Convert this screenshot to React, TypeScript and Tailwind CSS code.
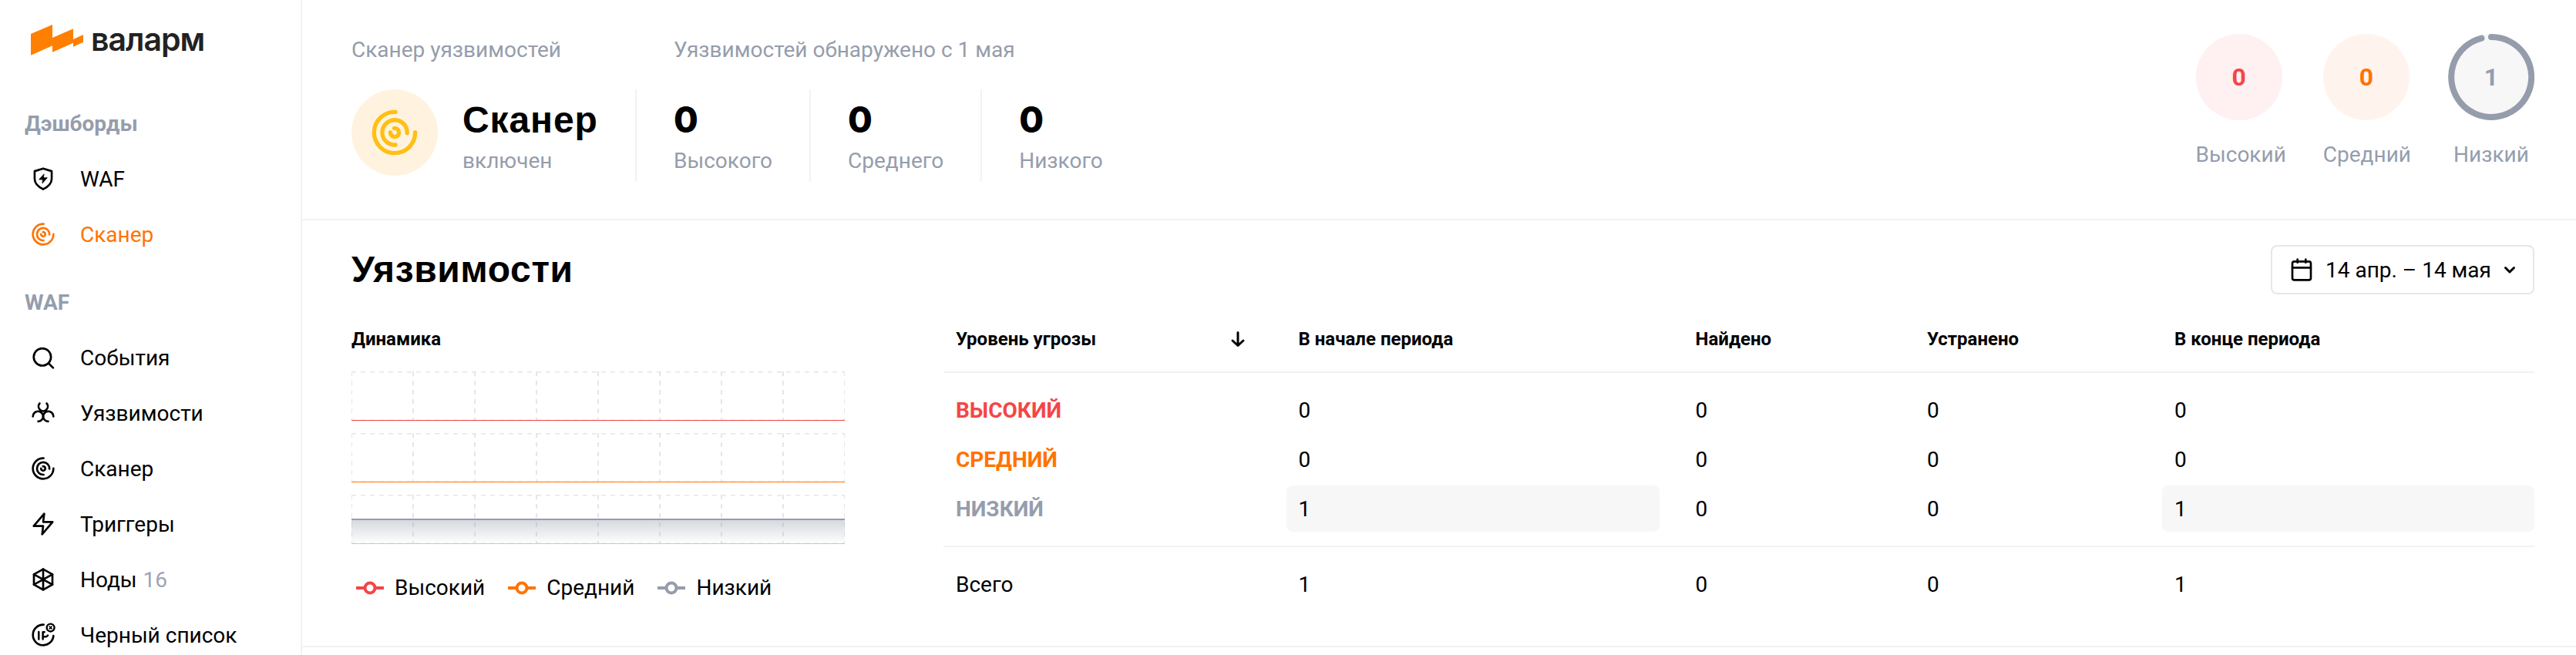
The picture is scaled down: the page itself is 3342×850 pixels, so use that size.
import React from "react";

type IconProps = { className?: string };

function Icon({ className = "", children }: IconProps & { children: React.ReactNode }) {
  return (
    <svg
      viewBox="0 0 24 24"
      fill="none"
      stroke="currentColor"
      strokeWidth="2"
      strokeLinecap="round"
      strokeLinejoin="round"
      className={`block shrink-0 ${className}`}
    >
      {children}
    </svg>
  );
}

const ShieldIcon = (p: IconProps) => (
  <Icon {...p}>
    <path d="M12 2L3.700 4.600V12c0 5.200 4.300 8.200 8.300 10.100 4-1.900 8.300-4.900 8.300-10.100V4.600Z" />
    <path d="M12.700 7.600L8 12.700H11.600L11.200 16.400L16 11H12.400Z" fill="currentColor" strokeWidth="0.600" />
  </Icon>
);

const ScannerIcon = (p: IconProps) => (
  <Icon {...p}>
    <path d="M12.400 2A10 10 0 1 0 22 11.900" />
    <path d="M12.400 18A6.050 6.050 0 1 1 18.050 12.300" />
    <path d="M9.900 11.900A2.100 2.100 0 1 0 11.800 9.900" />
  </Icon>
);

const SearchIcon = (p: IconProps) => (
  <Icon {...p}>
    <circle cx="11.200" cy="11.500" r="8.400" />
    <path d="M21.700 22L17.300 17.600" />
  </Icon>
);

const BiohazardIcon = (p: IconProps) => (
  <Icon {...p}>
    <path d="M8.600 2.600A4.500 4.500 0 1 0 15.400 2.600" />
    <path d="M2 15.300A5 5 0 0 1 12 15.300A5 5 0 0 1 7.200 20.200" />
    <path d="M22 15.300A5 5 0 0 0 12 15.300A5 5 0 0 0 16.800 20.200" />
  </Icon>
);

const BoltIcon = (p: IconProps) => (
  <Icon {...p}>
    <path d="M13 2L2.800 14H12L11 22L21.200 10H12Z" />
  </Icon>
);

const NodesIcon = (p: IconProps) => (
  <Icon {...p}>
    <path d="M12 2L21 7V17L12 22L3 17V7Z" />
    <path d="M12 2V22M3 7L21 17M21 7L3 17" />
  </Icon>
);

const BlacklistIcon = (p: IconProps) => (
  <Icon {...p}>
    <path d="M12.500 2A10 10 0 1 0 22 12.800" />
    <path d="M7.700 9V16.200M11.700 16.200V9.200H13.200M11.700 13.700H14.500A2.500 2.500 0 0 0 16.500 12.500" strokeWidth="1.900" />
    <circle cx="19.200" cy="4.900" r="3.700" strokeWidth="1.800" />
    <path d="M18.200 3.900L20.200 5.900M20.200 3.900L18.200 5.900" strokeWidth="1.300" />
  </Icon>
);

const CalendarIcon = (p: IconProps) => (
  <Icon {...p}>
    <rect x="3" y="4" width="18" height="18" rx="2" />
    <path d="M16 2V5M8 2V5M3 10H21" />
  </Icon>
);

const LogoMark = () => (
  <svg width="68" height="40" viewBox="0 0 68 40" className="block shrink-0" fill="#ff7f00">
    <path d="M0 12L28 0V17L55 5.300V19L68 13V22.700L55 28.700V23.700L28 35.700V27.300L0 39.700Z" />
  </svg>
);

function SectionTitle({ children }: { children: React.ReactNode }) {
  return <div className="flex h-[72px] items-center pt-0.5 pl-8 font-bold text-[#959dac]">{children}</div>;
}

function NavItem({
  icon: I,
  label,
  count,
  active,
}: {
  icon: (p: IconProps) => React.ReactElement;
  label: string;
  count?: number;
  active?: boolean;
}) {
  return (
    <a className={`flex h-[72px] items-center pl-10 ${active ? "text-[#ff7300]" : "text-black"}`}>
      <I className="size-8" />
      <span className="ml-8 pt-0.5">{label}</span>
      {count !== undefined && <span className="ml-2 pt-0.5 text-[#9da4b5]">{count}</span>}
    </a>
  );
}

function Sidebar() {
  return (
    <aside className="h-[850px] w-[392px] shrink-0 overflow-hidden border-r-2 border-[#f1f2f4]">
      <div className="flex h-[124px] items-start pt-8 pl-10">
        <LogoMark />
        <span className="ml-[10px] -mt-[5px] font-['Inter'] text-[41px] leading-[48px] font-semibold tracking-[-1px] text-[#222]">
          валарм
        </span>
      </div>
      <SectionTitle>Дэшборды</SectionTitle>
      <NavItem icon={ShieldIcon} label="WAF" />
      <NavItem icon={ScannerIcon} label="Сканер" active />
      <div className="h-4" />
      <SectionTitle>WAF</SectionTitle>
      <NavItem icon={SearchIcon} label="События" />
      <NavItem icon={BiohazardIcon} label="Уязвимости" />
      <NavItem icon={ScannerIcon} label="Сканер" />
      <NavItem icon={BoltIcon} label="Триггеры" />
      <NavItem icon={NodesIcon} label="Ноды" count={16} />
      <NavItem icon={BlacklistIcon} label="Черный список" />
    </aside>
  );
}

function Stat({ value, label }: { value: number; label: string }) {
  return (
    <div className="h-[120px] border-l-2 border-[#f2f2f4] px-12">
      <div className="pt-[9px] font-['Inter'] text-[46px] leading-[60px] font-extrabold">{value}</div>
      <div className="mt-2 leading-8 text-[#959dac]">{label}</div>
    </div>
  );
}

function Gauge({
  value,
  label,
  bg,
  fg,
  ring,
}: {
  value: number;
  label: string;
  bg: string;
  fg: string;
  ring?: boolean;
}) {
  return (
    <div className="flex flex-col">
      <div className={`relative flex size-[112px] items-center justify-center rounded-full text-[32px] font-bold ${bg} ${fg}`}>
        {ring && (
          <svg viewBox="0 0 112 112" className="absolute inset-0 size-full">
            <path d="M56 4A52 52 0 1 1 43.400 5.600" fill="none" stroke="currentColor" strokeWidth="8" strokeLinecap="round" />
          </svg>
        )}
        <span className="relative leading-10">{value}</span>
      </div>
      <div className="mt-[29px] text-center leading-8 text-[#959dac]">{label}</div>
    </div>
  );
}

function Summary() {
  return (
    <section className="flex h-[286px] justify-between border-b-2 border-[#f2f2f4] pr-[54px] pl-16">
      <div className="flex pt-[49px]">
        <div className="w-[368px]">
          <div className="leading-8 text-[#959dac]">Сканер уязвимостей</div>
          <div className="mt-[35px] flex">
            <div className="flex size-[112px] items-center justify-center rounded-full bg-[#fff3e0] text-[#ffbf14]">
              <ScannerIcon className="size-16" />
            </div>
            <div className="ml-8">
              <div className="pt-[10px] font-['Liberation_Sans'] text-[48px] leading-[60px] font-bold tracking-[0.9px]">
                Сканер
              </div>
              <div className="mt-[7px] leading-8 text-[#959dac]">включен</div>
            </div>
          </div>
        </div>
        <div>
          <div className="pl-[50px] leading-8 text-[#959dac]">Уязвимостей обнаружено с 1 мая</div>
          <div className="mt-[35px] flex">
            <Stat value={0} label="Высокого" />
            <Stat value={0} label="Среднего" />
            <Stat value={0} label="Низкого" />
          </div>
        </div>
      </div>
      <div className="flex gap-12 pt-11">
        <Gauge value={0} label="Высокий" bg="bg-[#fff0f1]" fg="text-[#f54545]" />
        <Gauge value={0} label="Средний" bg="bg-[#fff4ed]" fg="text-[#ff7300]" />
        <Gauge value={1} label="Низкий" bg="bg-[#f7f7f8]" fg="text-[#959dac]" ring />
      </div>
    </section>
  );
}

function MiniChart({ id, color, level }: { id: string; color: string; level: number }) {
  const y = level > 0 ? 32 : 64;
  return (
    <svg width="640" height="64" viewBox="0 0 640 64" className="block">
      <defs>
        <linearGradient id={id} x1="0" x2="0" y1="0" y2="1">
          <stop offset="0" stopColor={color} stopOpacity="0.4" />
          <stop offset="1" stopColor={color} stopOpacity="0" />
        </linearGradient>
      </defs>
      {[0, 80, 160, 240, 320, 400, 480, 560, 640].map((x) => (
        <line key={x} x1={x} x2={x} y1="0" y2="64" stroke="#e6e6ea" strokeWidth="2" strokeDasharray="6 6" />
      ))}
      <line x1="0" x2="640" y1="0" y2="0" stroke="#e6e6ea" strokeWidth="3" strokeDasharray="6 6" />
      <line x1="0" x2="640" y1="64" y2="64" stroke="#e6e6ea" strokeWidth="3" strokeDasharray="6 6" />
      {level > 0 && <rect x="0" y={y} width="640" height="32" fill={`url(#${id})`} />}
      {level > 0 && <line x1="0" x2="640" y1="64" y2="64" stroke="#c5c9d2" strokeWidth="2" />}
      <line x1="0" x2="640" y1={y} y2={y} stroke={color} strokeWidth={level > 0 ? 2 : 2.2} />
    </svg>
  );
}

function Legend({ color, label }: { color: string; label: string }) {
  return (
    <div className="flex items-center">
      <svg width="36" height="20" viewBox="0 0 36 20" fill="none" stroke={color} strokeWidth="4" className="block">
        <path d="M0 10H11M25 10H36" />
        <circle cx="18" cy="10" r="6.500" />
      </svg>
      <span className="ml-[14px] pt-px">{label}</span>
    </div>
  );
}

const COLS = "grid grid-cols-[444.500px_515px_300.500px_321px_483px]";

const ROWS = [
  { name: "ВЫСОКИЙ", color: "text-[#f54545]", values: [0, 0, 0, 0] },
  { name: "СРЕДНИЙ", color: "text-[#ff7300]", values: [0, 0, 0, 0] },
  { name: "НИЗКИЙ", color: "text-[#959dac]", values: [1, 0, 0, 1] },
];

function ThreatTable() {
  return (
    <div className="w-[2064px]">
      <div className={`${COLS} h-[86px] items-center border-b-2 border-[#f2f2f4] text-2xl font-bold`}>
        <div className="flex items-center justify-between pl-4">
          Уровень угрозы
          <svg width="20" height="24" viewBox="0 0 20 24" fill="none" stroke="#000" strokeWidth="3" strokeLinecap="round" strokeLinejoin="round" className="mr-[53px] block">
            <path d="M10 3.500V20M3 14L10 20.500L17 14" />
          </svg>
        </div>
        <div className="pl-4">В начале периода</div>
        <div className="pl-4">Найдено</div>
        <div className="pl-4">Устранено</div>
        <div className="pl-4">В конце периода</div>
      </div>
      <div className="border-b-2 border-[#f2f2f4] py-4">
        {ROWS.map((r) => (
          <div key={r.name} className={`${COLS} h-16 items-center`}>
            <div className={`pt-px pl-4 font-bold ${r.color}`}>{r.name}</div>
            {r.values.map((v, i) => (
              <div
                key={i}
                className={`flex h-[60px] items-center rounded-lg pt-px pl-4 ${i === 0 ? "mr-[31px]" : ""} ${v ? "bg-[#f7f7f7]" : ""}`}
              >
                {v}
              </div>
            ))}
          </div>
        ))}
      </div>
      <div className={`${COLS} h-24 items-center`}>
        {["Всего", 1, 0, 0, 1].map((v, i) => (
          <div key={i} className="pt-px pl-4">
            {v}
          </div>
        ))}
      </div>
    </div>
  );
}

export default function App() {
  return (
    <div className="flex h-[850px] w-[3342px] overflow-hidden bg-white font-['Roboto',sans-serif] text-[28px] leading-8 text-black">
      <Sidebar />
      <main className="flex-1">
        <Summary />
        <section className="h-[554px] border-b-2 border-[#f2f2f4] pt-8 pr-[54px] pl-16">
          <div className="flex h-16 items-center justify-between">
            <h1 className="font-['Liberation_Sans'] text-[48px] leading-[60px] font-bold tracking-[0.600px]">Уязвимости</h1>
            <button className="flex h-16 w-[342px] items-center rounded-lg border-2 border-[#e6e6eb] pl-[22px]">
              <CalendarIcon className="size-8" />
              <span className="ml-[15px] pt-px">14 апр. – 14 мая</span>
              <svg width="16" height="12" viewBox="0 0 16 12" fill="none" stroke="#000" strokeWidth="3" strokeLinecap="round" strokeLinejoin="round" className="ml-4 block">
                <path d="M2.500 3.500L8 9L13.500 3.500" />
              </svg>
            </button>
          </div>
          <div className="mt-4 flex justify-between">
            <div className="w-[640px]">
              <h2 className="flex h-[84px] items-center text-2xl font-bold">Динамика</h2>
              <div className="flex flex-col gap-4">
                <MiniChart id="area-high" color="#f54545" level={0} />
                <MiniChart id="area-medium" color="#ff7300" level={0} />
                <MiniChart id="area-low" color="#959dac" level={1} />
              </div>
              <div className="mt-10 flex gap-[30px] pl-[6px]">
                <Legend color="#f54545" label="Высокий" />
                <Legend color="#ff7300" label="Средний" />
                <Legend color="#959dac" label="Низкий" />
              </div>
            </div>
            <ThreatTable />
          </div>
        </section>
      </main>
    </div>
  );
}
